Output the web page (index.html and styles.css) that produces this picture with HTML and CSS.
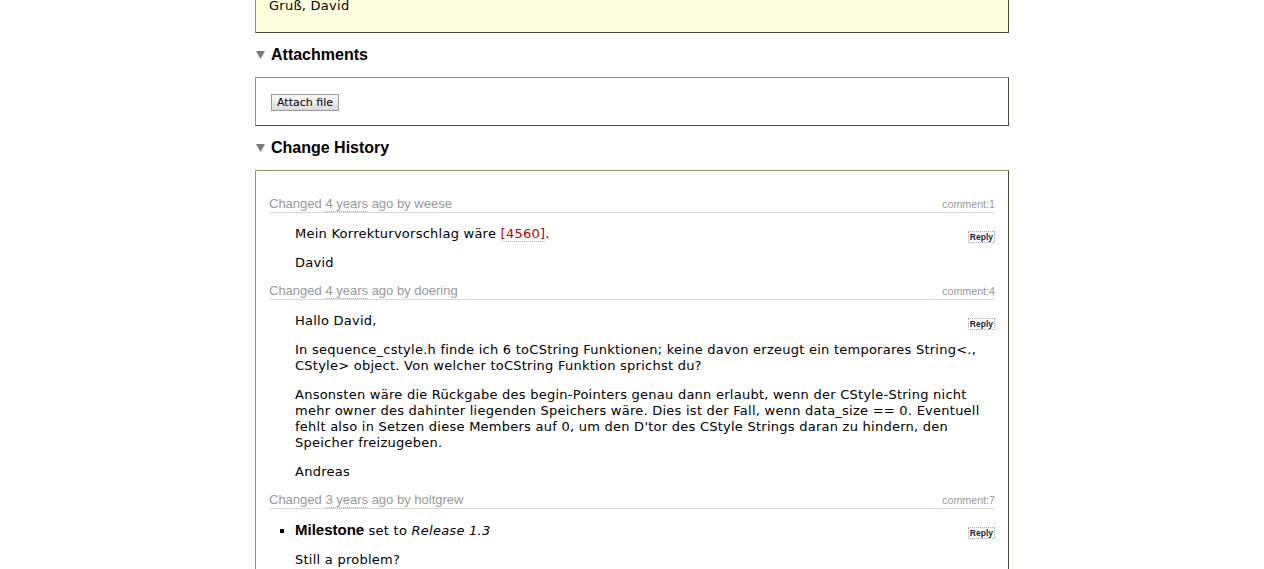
FILE: index.html
```html
<!DOCTYPE html>
<html>
<head>
<meta charset="utf-8">
<link rel="stylesheet" href="styles.css">
</head>
<body>
<div class="page">
  <div class="ticket">
    <p>Gruß, David</p>
  </div>

  <h2 class="foldable"><svg class="tri" width="9" height="8" viewBox="0 0 9 8"><polygon points="0,0 9,0 4.5,8" fill="#7a7a7a"/></svg>Attachments</h2>
  <div class="box attachments">
    <button class="attach">Attach file</button>
  </div>

  <h2 class="foldable"><svg class="tri" width="9" height="8" viewBox="0 0 9 8"><polygon points="0,0 9,0 4.5,8" fill="#7a7a7a"/></svg>Change History</h2>
  <div class="box changelog">
    <div class="change">
      <h3><span>Changed <a class="timeline">4 years</a> ago by weese</span><span class="cnum">comment:1</span></h3>
      <div class="change-body">
        <div class="reply"><button>Reply</button></div>
        <div class="comment">
          <p>Mein Korrekturvorschlag wäre <a class="changeset">[4560]</a>.</p>
          <p>David</p>
        </div>
      </div>
    </div>

    <div class="change">
      <h3><span>Changed <a class="timeline">4 years</a> ago by doering</span><span class="cnum">comment:4</span></h3>
      <div class="change-body">
        <div class="reply"><button>Reply</button></div>
        <div class="comment">
          <p>Hallo David,</p>
          <p>In sequence_cstyle.h finde ich 6 toCString Funktionen; keine davon erzeugt ein temporares String&lt;.,<br>CStyle&gt; object. Von welcher toCString Funktion sprichst du?</p>
          <p>Ansonsten wäre die Rückgabe des begin-Pointers genau dann erlaubt, wenn der CStyle-String nicht<br>mehr owner des dahinter liegenden Speichers wäre. Dies ist der Fall, wenn data_size == 0. Eventuell<br>fehlt also in Setzen diese Members auf 0, um den D'tor des CStyle Strings daran zu hindern, den<br>Speicher freizugeben.</p>
          <p>Andreas</p>
        </div>
      </div>
    </div>

    <div class="change">
      <h3><span>Changed <a class="timeline">3 years</a> ago by holtgrew</span><span class="cnum">comment:7</span></h3>
      <div class="change-body">
        <div class="reply"><button>Reply</button></div>
        <ul class="changes">
          <li><strong>Milestone</strong> set to <em>Release 1.3</em></li>
        </ul>
        <div class="comment">
          <p>Still a problem?</p>
        </div>
      </div>
    </div>
  </div>
</div>
</body>
</html>
```

FILE: styles.css
```css
html, body {
  margin: 0;
  padding: 0;
  background: #fff;
}

body {
  font-family: "DejaVu Sans", Verdana, sans-serif;
  font-size: 13px;
  color: #000;
}

.page {
  width: 754px;
  margin: 0 auto;
}

.ticket {
  margin-top: -30px;
  background: #ffd;
  border: 1px solid;
  border-color: #999966 #4a4a33 #4a4a33 #999966;
  padding: 27px 13px 5px;
}

.ticket p {
  margin: 0 0 13px;
  line-height: 16px;
  letter-spacing: 0.25px;
}

.foldable {
  display: flex;
  align-items: center;
  gap: 6px;
  margin: 12px 0 12px;
  padding-left: 1px;
  font: bold 16px/20px "Liberation Sans", Arial, sans-serif;
  color: #000;
}

.tri {
  display: block;
  flex: none;
}

.box {
  border: 1px solid;
  border-color: #999966 #4a4a33 #4a4a33 #999966;
}

.attachments {
  display: flex;
  align-items: flex-start;
  padding: 16px 15px 14px;
}

.attach {
  height: 17px;
  margin: 0;
  padding: 0 5px;
  font: 11px/15px "DejaVu Sans", Verdana, sans-serif;
  color: #000;
  background: linear-gradient(#fafafa, #dcdcdc);
  border: 1px solid #9a9a9a;
  border-radius: 0;
}

.changelog {
  padding: 25px 13px 0;
}

.change h3 {
  display: flex;
  justify-content: space-between;
  align-items: baseline;
  margin: 0;
  font: normal 13px/16px "Liberation Sans", Arial, sans-serif;
  color: #999;
  border-bottom: 1px solid #d7d7d7;
}

.timeline {
  color: #999;
  text-decoration: none;
  border-bottom: 1px dotted #bbb;
}

.cnum {
  font-size: 10.7px;
  color: #999;
}

.change-body {
  display: flow-root;
}

.reply {
  float: right;
  margin-top: 18px;
}

.reply button {
  display: block;
  height: 12px;
  margin: 0;
  padding: 0 1px;
  font: bold 8.5px/10px "Liberation Sans", Arial, sans-serif;
  color: #1a1a3a;
  background: #fff;
  border: 1px dotted #aaa;
  border-radius: 0;
}

.comment {
  margin-left: 26px;
}

.comment p {
  margin: 13px 0;
  line-height: 16px;
  letter-spacing: 0.25px;
}

.comment p:last-child {
  margin-bottom: 12px;
}

.changeset {
  color: #bb0000;
  text-decoration: none;
  border-bottom: 1px dotted #bbb;
}

.changes {
  margin: 13px 0;
  padding-left: 26px;
  list-style: square;
  line-height: 16px;
  letter-spacing: 0.25px;
}

.changes strong {
  font-family: "Liberation Sans", Arial, sans-serif;
  font-size: 15px;
  letter-spacing: 0;
}
```
